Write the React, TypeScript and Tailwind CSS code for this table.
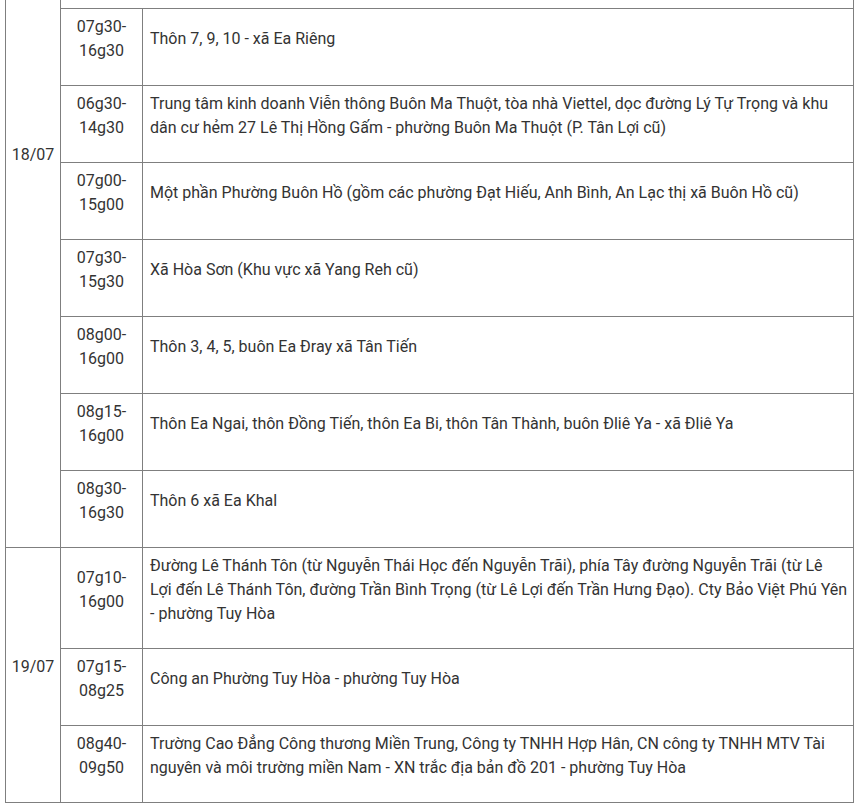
import React from "react";

interface Slot {
  time: [string, string];
  lines: string[];
}

interface DayGroup {
  date: string;
  slots: Slot[];
}

const day18: DayGroup = {
  date: "18/07",
  slots: [
    { time: ["07g30-", "16g30"], lines: ["Thôn 7, 9, 10 - xã Ea Riêng"] },
    {
      time: ["06g30-", "14g30"],
      lines: [
        "Trung tâm kinh doanh Viễn thông Buôn Ma Thuột, tòa nhà Viettel, dọc đường Lý Tự Trọng và khu",
        "dân cư hẻm 27 Lê Thị Hồng Gấm - phường Buôn Ma Thuột (P. Tân Lợi cũ)",
      ],
    },
    {
      time: ["07g00-", "15g00"],
      lines: ["Một phần Phường Buôn Hồ (gồm các phường Đạt Hiếu, Anh Bình, An Lạc thị xã Buôn Hồ cũ)"],
    },
    { time: ["07g30-", "15g30"], lines: ["Xã Hòa Sơn (Khu vực xã Yang Reh cũ)"] },
    { time: ["08g00-", "16g00"], lines: ["Thôn 3, 4, 5, buôn Ea Đray xã Tân Tiến"] },
    {
      time: ["08g15-", "16g00"],
      lines: ["Thôn Ea Ngai, thôn Đồng Tiến, thôn Ea Bi, thôn Tân Thành, buôn Đliê Ya - xã Đliê Ya"],
    },
    { time: ["08g30-", "16g30"], lines: ["Thôn 6 xã Ea Khal"] },
  ],
};

const day19: DayGroup = {
  date: "19/07",
  slots: [
    {
      time: ["07g10-", "16g00"],
      lines: [
        "Đường Lê Thánh Tôn (từ Nguyễn Thái Học đến Nguyễn Trãi), phía Tây đường Nguyễn Trãi (từ Lê",
        "Lợi đến Lê Thánh Tôn, đường Trần Bình Trọng (từ Lê Lợi đến Trần Hưng Đạo). Cty Bảo Việt Phú Yên",
        "- phường Tuy Hòa",
      ],
    },
    { time: ["07g15-", "08g25"], lines: ["Công an Phường Tuy Hòa - phường Tuy Hòa"] },
    {
      time: ["08g40-", "09g50"],
      lines: [
        "Trường Cao Đẳng Công thương Miền Trung, Công ty TNHH Hợp Hân, CN công ty TNHH MTV Tài",
        "nguyên và môi trường miền Nam - XN trắc địa bản đồ 201 - phường Tuy Hòa",
      ],
    },
  ],
};

const SlotRow: React.FC<{ slot: Slot; first?: boolean }> = ({ slot, first }) => (
  <div className={`flex ${first ? "" : "border-t border-[#7f7f7f]"}`}>
    <div className="w-[82px] shrink-0 border-r border-[#7f7f7f] flex items-center justify-center pt-[6px] pb-[22px] text-center">
      <div>
        {slot.time[0]}
        <br />
        {slot.time[1]}
      </div>
    </div>
    <div className="flex-1 flex items-center px-[7px] pt-[6px] pb-[22px]">
      <div className="whitespace-nowrap">
        {slot.lines.map((l, i) => (
          <div key={i}>{l}</div>
        ))}
      </div>
    </div>
  </div>
);

export default function App() {
  return (
    <div
      className="min-h-screen bg-white text-[16px] leading-[24px] text-[#333333] overflow-hidden"
      style={{ fontFamily: "Roboto, 'Liberation Sans', sans-serif" }}
    >
      <div className="ml-[5px] w-[849px] border-l border-r border-b border-[#7f7f7f]">
        {/* 18/07 - continues from rows above */}
        <div className="flex">
          <div className="w-[55px] shrink-0 border-r border-[#7f7f7f] flex justify-center pt-[143px]">
            {day18.date}
          </div>
          <div className="flex-1 flex flex-col">
            <div className="h-[8px]" />
            {day18.slots.map((s, i) => (
              <div key={i} className="border-t border-[#7f7f7f]">
                <SlotRow slot={s} first />
              </div>
            ))}
          </div>
        </div>

        {/* 19/07 */}
        <div className="flex border-t border-[#7f7f7f]">
          <div className="w-[55px] shrink-0 border-r border-[#7f7f7f] flex items-center justify-center pt-[6px] pb-[22px]">
            {day19.date}
          </div>
          <div className="flex-1 flex flex-col">
            {day19.slots.map((s, i) => (
              <SlotRow key={i} slot={s} first={i === 0} />
            ))}
          </div>
        </div>
      </div>
    </div>
  );
}
